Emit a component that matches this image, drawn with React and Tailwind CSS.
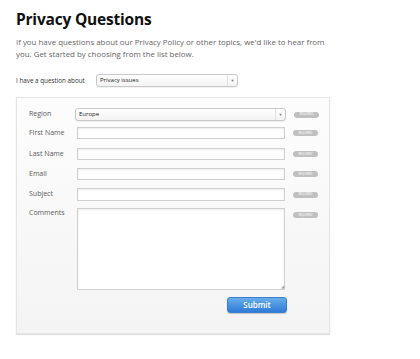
function Required() {
    return (
        <span className="ml-[8px] flex h-[6px] w-[25px] shrink-0 items-center justify-center rounded-full bg-[#c0c0c0] text-[3px] leading-none tracking-tight text-white">
            REQUIRED
        </span>
    )
}

function Row({ label, className, children, badgeTop = 'items-center' }) {
    return (
        <div className={`flex ${badgeTop} ${className}`}>
            <div className="w-[46px] shrink-0 text-[7px] text-[#5a5a5a]">{label}</div>
            {children}
        </div>
    )
}

function Field({ h = 'h-[12px]' }) {
    return (
        <div className={`ml-[2px] w-[208px] ${h} border border-[#cfcfcf] bg-white shadow-[inset_0_1px_2px_rgba(0,0,0,0.08)]`} />
    )
}

function Select({ value, w, ml = '' }) {
    return (
        <div className={`${ml} ${w} flex h-[13px] items-center rounded-[3px] border border-[#c8c8c8] bg-gradient-to-b from-white to-[#f3f3f3] shadow-[0_1px_1px_rgba(0,0,0,0.06)]`}>
            <span className="flex-1 pl-[3px] text-[6px] text-[#222]">{value}</span>
            <span className="flex h-full w-[10px] items-center justify-center border-l border-[#e2e2e2] text-[4px] text-[#777]">▼</span>
        </div>
    )
}

export default function App() {
    return (
        <div className="min-h-[359px] bg-white pl-[16px] pt-[9px] font-['Open_Sans',sans-serif]">
            <h1 className="text-[15.5px] font-bold leading-[20px] tracking-[-0.2px] text-[#111]">Privacy Questions</h1>
            <p className="mt-[7px] w-[318px] text-[7.9px] leading-[12px] text-[#666]">
                If you have questions about our Privacy Policy or other topics, we'd like to hear from you. Get started by choosing from the list below.
            </p>
            <div className="mt-[14px] flex items-center">
                <span className="w-[80px] text-[6.3px] text-[#333]">I have a question about</span>
                <Select value="Privacy issues" w="w-[142px]" />
            </div>
            <div className="mt-[10px] h-[237px] w-[314px] border border-[#e4e4e4] bg-gradient-to-b from-[#fdfdfd] to-[#f4f4f4] pl-[12px] pt-[10px] shadow-[0_1px_1px_rgba(0,0,0,0.12)]">
                <Row label="Region">
                    <Select value="Europe" w="w-[211px]" />
                    <Required />
                </Row>
                <Row label="First Name" className="mt-[6px]">
                    <Field />
                    <Required />
                </Row>
                <Row label="Last Name" className="mt-[9px]">
                    <Field />
                    <Required />
                </Row>
                <Row label="Email" className="mt-[8px]">
                    <Field />
                    <Required />
                </Row>
                <Row label="Subject" className="mt-[8px]">
                    <Field h="h-[13px]" />
                    <Required />
                </Row>
                <Row label="Comments" className="mt-[7px]" badgeTop="items-start">
                    <div className="relative">
                        <Field h="h-[82px]" />
                        <span className="absolute bottom-[1px] right-[1px] text-[4px] leading-none text-[#999]">◢</span>
                    </div>
                    <div className="mt-[4px]">
                        <Required />
                    </div>
                </Row>
                <div className="mt-[7px] flex">
                    <button className="ml-[198px] h-[16px] w-[60px] rounded-[3px] border border-[#3a7fcf] bg-gradient-to-b from-[#66aeea] to-[#2f7bd6] text-[8px] font-semibold text-white shadow-[0_1px_1px_rgba(0,0,0,0.2)]">
                        Submit
                    </button>
                </div>
            </div>
        </div>
    )
}
